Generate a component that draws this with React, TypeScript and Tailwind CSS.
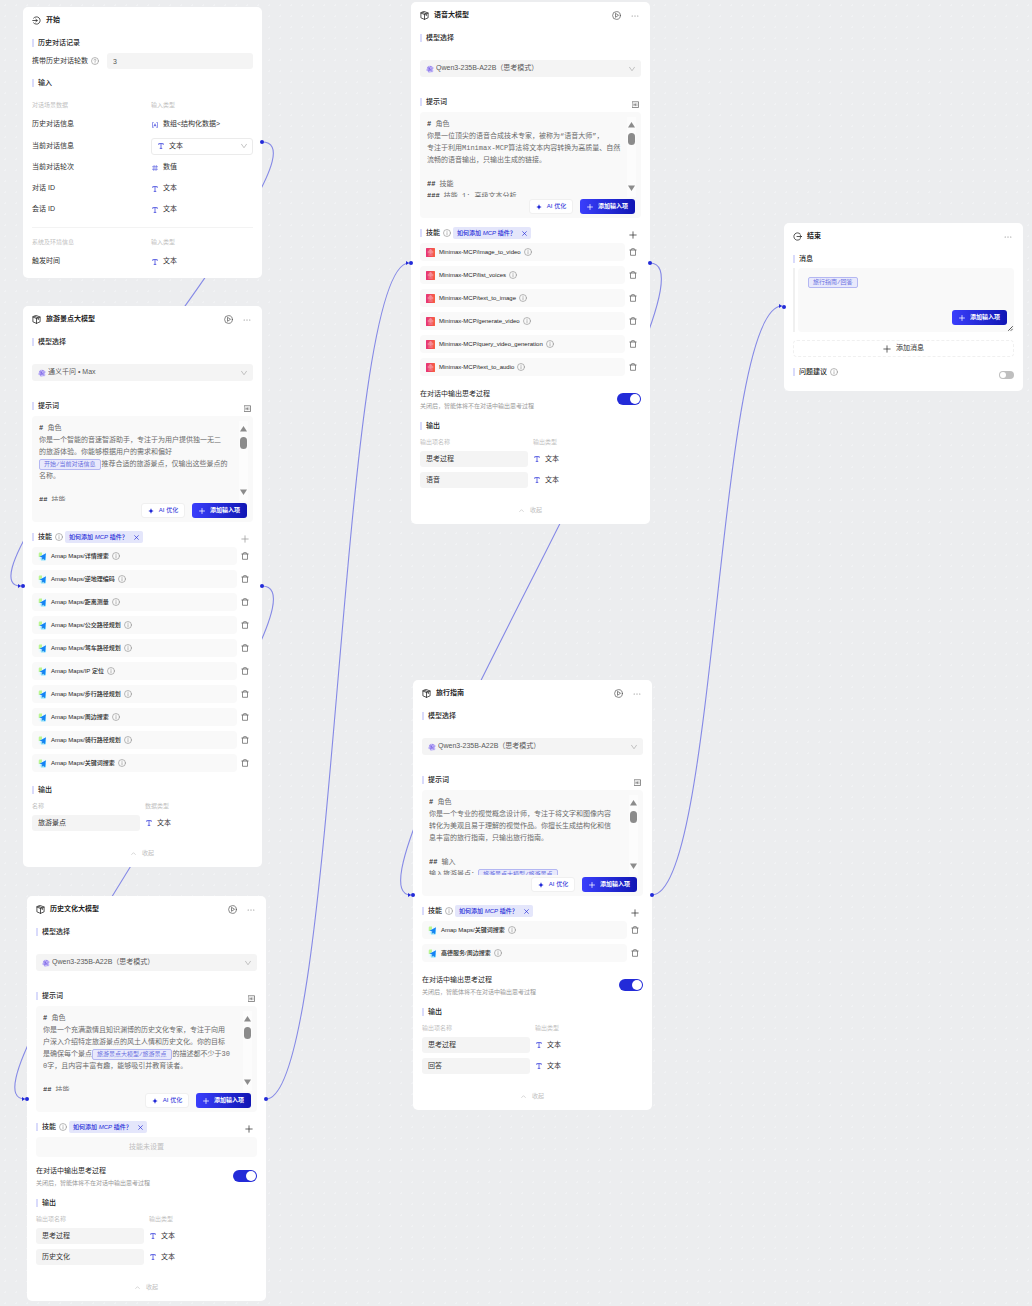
import React, { useId } from "react";

type Skill = { vendor: "amap" | "minimax"; name: string };

/* ---------- icons ---------- */

const stroke = {
  fill: "none",
  stroke: "currentColor",
  strokeLinecap: "round" as const,
  strokeLinejoin: "round" as const,
  "aria-hidden": true,
};

const StartIcon = () => (
  <svg viewBox="0 0 18 18" className="size-[9px] shrink-0" {...stroke} strokeWidth="1.5">
    <path d="M3.2 4.2A7.4 7.4 0 1 1 3.2 13.8" />
    <path d="M1.500 9h9M7.600 6.400L10.500 9l-2.900 2.600" />
  </svg>
);

const EndIcon = () => (
  <svg viewBox="0 0 18 18" className="size-[9px] shrink-0" {...stroke} strokeWidth="1.5">
    <path d="M14.6 4A7.4 7.4 0 1 0 15 13.6" />
    <path d="M8 9h9M14 6.4l3 2.6-3 2.6" />
  </svg>
);

const CubeIcon = () => (
  <svg viewBox="0 0 18 18" className="size-[9px] shrink-0" {...stroke} strokeWidth="1.5">
    <path d="M9 1.2l7.2 2.8v9.6L9 16.8l-7.2-3.2V4z" />
    <path d="M1.8 4L9 7l7.2-3M9 7v9.8M5.2 2.8l7.4 3v3.4" />
  </svg>
);

const PlayIcon = () => (
  <svg viewBox="0 0 18 18" className="size-[9px]" {...stroke} strokeWidth="1.4">
    <circle cx="9" cy="9" r="7.8" />
    <path d="M7 5.4v7.2L12.4 9z" />
  </svg>
);

const DotsIcon = () => (
  <svg viewBox="0 0 16 16" className="size-[8px]" fill="currentColor" aria-hidden>
    <circle cx="2.4" cy="8" r="1.100" />
    <circle cx="8" cy="8" r="1.100" />
    <circle cx="13.6" cy="8" r="1.100" />
  </svg>
);

const InfoIcon = () => (
  <svg viewBox="0 0 16 16" className="size-[8px] shrink-0 text-[#8c8c8c]" {...stroke} strokeWidth="1.2">
    <circle cx="8" cy="8" r="7" />
    <path d="M8 7.2v4.4M8 4.4v.4" />
  </svg>
);

const HelpIcon = () => (
  <svg viewBox="0 0 16 16" className="size-[8px] shrink-0 text-[#8c8c8c]" {...stroke} strokeWidth="1.2">
    <circle cx="8" cy="8" r="7" />
    <path d="M6 6.4a2 2 0 1 1 2.6 1.9c-.5.2-.6.5-.6 1.2M8 11.6v.3" />
  </svg>
);

const TrashIcon = () => (
  <svg viewBox="0 0 16 16" className="size-[8px]" {...stroke} strokeWidth="1.5">
    <path d="M1.6 4h12.8M5.4 3.6V1.4h5.2v2.2M3 4.2v10.4h10V4.2" />
  </svg>
);

const PlusIcon = () => (
  <svg viewBox="0 0 16 16" className="size-[8px] shrink-0" {...stroke} strokeWidth="1.5">
    <path d="M8 1.6v12.8M1.6 8h12.8" />
  </svg>
);

const CloseIcon = () => (
  <svg viewBox="0 0 12 12" className="size-[5px]" {...stroke} strokeWidth="1.6">
    <path d="M1.5 1.5l9 9M10.5 1.5l-9 9" />
  </svg>
);

const ChevronIcon = ({ up = false }: { up?: boolean }) => (
  <svg
    viewBox="0 0 12 12"
    className={up ? "size-[5px]" : "pointer-events-none size-[6px] shrink-0 text-[#b0b0b0]"}
    {...stroke}
    strokeWidth="1.5"
  >
    <path d={up ? "M1.5 8.5L6 4l4.5 4.5" : "M1 2.5l5 7 5-7"} />
  </svg>
);

const PanelIcon = () => (
  <svg viewBox="0 0 14 14" className="size-[7px]" {...stroke} strokeWidth="1.3">
    <rect x="1" y="1.5" width="12" height="11.5" />
    <path d="M4 5.500v4M7 5.500v4M4 7.500h3M9.800 5.500v4" strokeWidth="1" />
  </svg>
);

const SparkIcon = () => (
  <svg viewBox="0 0 12 12" className="size-[6px]" fill="#232bd8" aria-hidden>
    <path d="M6 0c.6 3.6 2.4 5.4 6 6-3.6.6-5.4 2.4-6 6-.6-3.6-2.4-5.4-6-6 3.6-.6 5.4-2.4 6-6z" />
  </svg>
);

const QwenIcon = () => (
  <svg viewBox="0 0 16 16" className="size-[8px] shrink-0" fill="none" aria-hidden>
    <path d="M5.5 1.5h4l1.500 2.500h3.500l1 2.500-1.800 2.500 1.300 3-2 2.500h-3.500L8 15.500l-3.500-.5L3 12H1L.5 9l2-3-.8-2.500h3z" fill="#c3b9f7" />
    <path d="M5 3l3 5M8 3.500h4.500M13 6.500l-4 3M11.500 13L8.500 8.500M3 10h5.500M5 13l2-4.500M2.500 5.500L8 7.500" stroke="#7459e4" strokeWidth="1.300" />
  </svg>
);

const AmapIcon = () => (
  <svg viewBox="0 0 18 18" className="size-[9px] shrink-0" aria-hidden>
    <rect x="1" y="1" width="16" height="16" rx="3" fill="#edf9fd" />
    <path d="M1.500 3a2 2 0 0 1 2-2H8v5L4 10H1.500z" fill="#bdf58f" />
    <path d="M5 12h5l6-4v7a2 2 0 0 1-2 2H6z" fill="#8fe0fa" />
    <path d="M16 2.500L3 9.500l5 1.500 6 5.500z" fill="#1283f5" />
    <path d="M8 11l1 4 2-1.500z" fill="#0b5fd0" />
  </svg>
);

const MinimaxIcon = () => (
  <svg viewBox="0 0 18 18" className="size-[9px] shrink-0" aria-hidden>
    <defs>
      <linearGradient id="mm" x1="0" x2="1">
        <stop offset="0" stopColor="#e6317a" />
        <stop offset="1" stopColor="#f8603e" />
      </linearGradient>
    </defs>
    <rect width="18" height="18" rx="1" fill="url(#mm)" />
    <path
      d="M4.500 6.500v3.500M6.800 4v6.500M9 3v8M11.200 4v6.500M13.500 6.500v3.500M5.500 14h7"
      stroke="#fff"
      strokeOpacity=".7"
      strokeWidth="1.100"
      strokeLinecap="round"
      fill="none"
    />
  </svg>
);

const TextTypeIcon = () => (
  <svg viewBox="0 0 12 12" className="size-[6px] shrink-0 text-[#3b42dc]" {...stroke} strokeWidth="1.5">
    <path d="M1.5 3V1.2h9V3M6 1.200v9.600M4.200 10.800h3.600" />
  </svg>
);

const NumberTypeIcon = () => (
  <svg viewBox="0 0 12 12" className="size-[6px] shrink-0 text-[#3b42dc]" {...stroke} strokeWidth="1.1">
    <path d="M4.200 1L3.600 11M8.600 1L8 11M1 3.500h10.500M.5 8.500H11" />
  </svg>
);

const ArrayTypeIcon = () => (
  <svg viewBox="0 0 12 12" className="size-[6px] shrink-0 text-[#3b42dc]" {...stroke} strokeWidth="1.1">
    <path d="M2.5 1H1v10h1.5M9.5 1H11v10H9.5M4 8.500L6 3.500l2 5M4.600 7h2.800" />
  </svg>
);

/* ---------- shared pieces ---------- */

function Card({
  place,
  label,
  children,
  port,
}: {
  place: string;
  label: string;
  children: React.ReactNode;
  port?: React.ReactNode;
}) {
  return (
    <section aria-label={label} className={`absolute w-[239px] rounded-[5px] bg-white px-[9px] ${place}`}>
      {children}
      {port}
    </section>
  );
}

const InPort = ({ at }: { at: string }) => (
  <span className={`absolute -left-[2px] size-[4px] rounded-full bg-[#232bd8] ${at}`} />
);
const OutPort = ({ at }: { at: string }) => (
  <span className={`absolute -right-[2px] size-[4px] rounded-full bg-[#232bd8] ${at}`} />
);

function CardHeader({
  icon,
  title,
  run = true,
  menu = true,
}: {
  icon: React.ReactNode;
  title: string;
  run?: boolean;
  menu?: boolean;
}) {
  return (
    <header className="flex h-[27px] items-center text-[#1f1f1f]">
      {icon}
      <h2 className="ml-[5px] flex-1 text-[7px] font-bold">{title}</h2>
      {run && (
        <button aria-label="运行" className="mr-[10px] text-[#555]">
          <PlayIcon />
        </button>
      )}
      {menu && (
        <button aria-label="更多" className="mr-[2px] text-[#777]">
          <DotsIcon />
        </button>
      )}
    </header>
  );
}

function SectionTitle({ title, children }: { title: string; children?: React.ReactNode }) {
  return (
    <div className="flex h-[18px] items-center">
      <span className="mr-[4px] h-[8px] w-[2px] bg-[#d9dbfb]" />
      <h3 className="text-[7px] font-medium text-[#1f1f1f]">{title}</h3>
      {children}
    </div>
  );
}

function ModelSelect({ model }: { model: string }) {
  return (
    <div className="mt-[13px] flex h-[17px] items-center rounded-[3px] bg-[#f4f4f4] pr-[6px] pl-[6px]">
      <QwenIcon />
      <select
        aria-label="模型选择"
        className="ml-[2px] h-full flex-1 appearance-none bg-transparent text-[7px] text-[#595959]"
      >
        <option>{model}</option>
      </select>
      <ChevronIcon />
    </div>
  );
}

const Chip = ({ children }: { children: React.ReactNode }) => (
  <span className="mr-px inline-block h-[11px] rounded-[2px] border border-[#b4b7f2] bg-[#e8e9fc] px-[4px] align-middle text-[6px] leading-[9px] text-[#6a70e0]">
    {children}
  </span>
);

const Mark = ({ children }: { children: React.ReactNode }) => <b className="text-[#333]">{children}</b>;

function AddInputButton() {
  return (
    <button className="flex h-[15px] w-[55px] items-center justify-center gap-[5px] rounded-[3px] bg-linear-to-r from-[#3a3efc] to-[#1015b4] text-[6px] font-bold text-white">
      <svg viewBox="0 0 12 12" className="size-[6px]" {...stroke} strokeWidth="1.5">
        <path d="M6 1v10M1 6h10" />
      </svg>
      添加输入项
    </button>
  );
}

function Prompt({ lines }: { lines: React.ReactNode[] }) {
  return (
    <div className="mt-px flex h-[106px] flex-col rounded-[4px] bg-[#f9f9f9] pt-[5px] pr-[5px] pl-[7px]">
      <div className="flex h-[80px] overflow-hidden">
        <div
          role="textbox"
          aria-label="提示词"
          contentEditable
          suppressContentEditableWarning
          className="flex-1 pt-px font-['Liberation_Mono','Noto_Sans_CJK_SC',monospace] text-[7px] leading-[12px] whitespace-nowrap text-[#6b6b6b] outline-none"
        >
          {lines.map((line, i) => (
            <div key={i} className="h-[12px]">
              {line}
            </div>
          ))}
        </div>
        <div className="flex w-[9px] flex-col items-center bg-[#fcfcfc] text-[#8b8b8b]">
          <svg viewBox="0 0 7 6" className="mt-[5px] h-[6px] w-[7px] shrink-0" fill="currentColor" aria-hidden>
            <path d="M3.5 0L7 5.500H0z" />
          </svg>
          <span className="mt-[5px] h-[12px] w-[7px] rounded-full bg-[#8b8b8b]" />
          <svg viewBox="0 0 7 6" className="mt-auto mb-[6px] h-[6px] w-[7px] shrink-0" fill="currentColor" aria-hidden>
            <path d="M3.5 6L7 .5H0z" />
          </svg>
        </div>
      </div>
      <div className="mt-[2px] flex justify-end gap-[7px] pr-px">
        <button className="flex h-[15px] w-[44px] items-center justify-center gap-[5px] rounded-[3px] border border-[#f0f0f0] bg-white text-[6px] text-[#232bd8]">
          <SparkIcon />
          AI 优化
        </button>
        <AddInputButton />
      </div>
    </div>
  );
}

function SkillTitle({ faded = false }: { faded?: boolean }) {
  return (
    <div className="mt-[6px] mb-px">
      <SectionTitle title="技能">
        <span className="ml-[3px]">
          <InfoIcon />
        </span>
        <span className="ml-[2px] flex h-[12px] w-[78px] items-center justify-between rounded-[2px] bg-[#e4e6fb] px-[4px] text-[#232bd8]">
          <a href="#mcp" className="text-[6px] font-medium whitespace-nowrap">
            如何添加 <i>MCP</i> 插件？
          </a>
          <button aria-label="关闭提示">
            <CloseIcon />
          </button>
        </span>
        <button
          aria-label="添加技能"
          className={faded ? "mt-[3px] mr-[4px] ml-auto text-[#999]" : "mt-[3px] mr-[4px] ml-auto text-[#333]"}
        >
          <PlusIcon />
        </button>
      </SectionTitle>
    </div>
  );
}

function SkillList({ skills }: { skills: Skill[] }) {
  return (
    <ul>
      {skills.map((skill) => (
        <li key={skill.name} className="mb-[5px] flex h-[18px] items-center">
          <div className="flex h-full flex-1 items-center rounded-[4px] bg-[#f9f9f9] pl-[6px] text-[6px] font-medium text-[#1f1f1f]">
            {skill.vendor === "amap" ? <AmapIcon /> : <MinimaxIcon />}
            <span className="mr-[3px] ml-[4px]">{skill.name}</span>
            <InfoIcon />
          </div>
          <button aria-label={`删除 ${skill.name}`} className="mr-[4px] ml-[4px] text-[#666]">
            <TrashIcon />
          </button>
        </li>
      ))}
    </ul>
  );
}

function ThinkingToggle() {
  const id = useId();
  return (
    <div className="flex justify-between pt-[7px] pb-[5px]">
      <div>
        <label htmlFor={id} className="block text-[7px] leading-[12px] text-[#1f1f1f]">
          在对话中输出思考过程
        </label>
        <p className="text-[6px] leading-[12px] text-[#999]">关闭后，智能体将不在对话中输出思考过程</p>
      </div>
      <input
        id={id}
        type="checkbox"
        role="switch"
        defaultChecked
        className="mt-[5px] flex h-[12px] w-[24px] appearance-none items-center rounded-full bg-[#bfbfbf] px-px before:block before:size-[10px] before:rounded-full before:bg-white before:content-[''] checked:justify-end checked:bg-[#232bd8]"
      />
    </div>
  );
}

function Outputs({ heads, names }: { heads: [string, string]; names: string[] }) {
  return (
    <>
      <SectionTitle title="输出" />
      <table className="w-full table-fixed border-collapse text-left">
        <thead>
          <tr className="h-[16px] align-top text-[6px] leading-[14px] text-[#bfbfbf]">
            <th className="w-[113px] font-normal">{heads[0]}</th>
            <th className="font-normal">{heads[1]}</th>
          </tr>
        </thead>
        <tbody>
          {names.map((name) => (
            <tr key={name} className="h-[21px] align-top text-[7px] text-[#333]">
              <td>
                <input
                  aria-label={heads[0]}
                  defaultValue={name}
                  className="block h-[16px] w-[108px] rounded-[3px] bg-[#f4f4f4] px-[6px] text-[7px] leading-[16px]"
                />
              </td>
              <td>
                <span className="flex h-[16px] items-center gap-[5px] pl-px">
                  <TextTypeIcon />
                  文本
                </span>
              </td>
            </tr>
          ))}
        </tbody>
      </table>
      <div className="flex justify-center pt-[9px] pb-[6px]">
        <button className="flex h-[16px] items-center gap-[6px] text-[6px] text-[#bfbfbf]">
          <ChevronIcon up />
          收起
        </button>
      </div>
    </>
  );
}

function ModelCard({
  place,
  title,
  model,
  prompt,
  skills,
  thinking = true,
  fadedAdd = false,
  heads = ["输出项名称", "输出类型"],
  outputs,
  port,
}: {
  place: string;
  title: string;
  model: string;
  prompt: React.ReactNode[];
  skills: Skill[];
  thinking?: boolean;
  fadedAdd?: boolean;
  heads?: [string, string];
  outputs: string[];
  port: React.ReactNode;
}) {
  return (
    <Card place={place} label={title} port={port}>
      <CardHeader icon={<CubeIcon />} title={title} />
      <SectionTitle title="模型选择" />
      <ModelSelect model={model} />
      <div className="mt-[16px]">
        <SectionTitle title="提示词">
          <button aria-label="展开编辑" className="mt-[4px] mr-[2px] ml-auto text-[#555]">
            <PanelIcon />
          </button>
        </SectionTitle>
      </div>
      <Prompt lines={prompt} />
      <SkillTitle faded={fadedAdd} />
      {skills.length > 0 ? (
        <SkillList skills={skills} />
      ) : (
        <p className="mb-px flex h-[20px] items-center justify-center rounded-[4px] bg-[#f9f9f9] text-[7px] text-[#bfbfbf]">
          技能未设置
        </p>
      )}
      {thinking ? <ThinkingToggle /> : <div className="h-[4px]" />}
      <Outputs heads={heads} names={outputs} />
    </Card>
  );
}

/* ---------- start and end nodes ---------- */

type InputRow = { name: string; type: string; icon: React.ReactNode; select?: boolean };

const startRows: InputRow[] = [
  { name: "历史对话信息", type: "数组<结构化数据>", icon: <ArrayTypeIcon /> },
  { name: "当前对话信息", type: "文本", icon: <TextTypeIcon />, select: true },
  { name: "当前对话轮次", type: "数值", icon: <NumberTypeIcon /> },
  { name: "对话 ID", type: "文本", icon: <TextTypeIcon /> },
  { name: "会话 ID", type: "文本", icon: <TextTypeIcon /> },
];

function InputTable({ heads, rows }: { heads: [string, string]; rows: InputRow[] }) {
  return (
    <table className="w-full table-fixed border-collapse text-left">
      <thead>
        <tr className="h-[16px] align-top text-[6px] leading-[14px] text-[#bfbfbf]">
          <th className="w-[119px] font-normal">{heads[0]}</th>
          <th className="font-normal">{heads[1]}</th>
        </tr>
      </thead>
      <tbody>
        {rows.map((row) => (
          <tr key={row.name} className={row.select ? "h-[22px] text-[7px] text-[#333]" : "h-[21px] text-[7px] text-[#333]"}>
            <td>{row.name}</td>
            <td>
              {row.select ? (
                <span className="flex h-[17px] items-center gap-[5px] rounded-[3px] border border-[#ebebeb] pr-[5px] pl-[6px]">
                  {row.icon}
                  <select aria-label={row.name} className="h-full flex-1 appearance-none bg-transparent text-[7px]">
                    <option>{row.type}</option>
                  </select>
                  <ChevronIcon />
                </span>
              ) : (
                <span className="flex items-center gap-[5px] pl-px">
                  {row.icon}
                  {row.type}
                </span>
              )}
            </td>
          </tr>
        ))}
      </tbody>
    </table>
  );
}

function StartCard() {
  return (
    <Card place="left-[23px] top-[7px]" label="开始" port={<OutPort at="top-[133px]" />}>
      <CardHeader icon={<StartIcon />} title="开始" run={false} menu={false} />
      <SectionTitle title="历史对话记录" />
      <div className="mt-px mb-[5px] flex h-[16px] items-center">
        <label htmlFor="rounds" className="mr-[3px] text-[7px] text-[#333]">
          携带历史对话轮数
        </label>
        <HelpIcon />
        <input
          id="rounds"
          defaultValue="3"
          className="ml-auto h-[16px] w-[146px] rounded-[3px] bg-[#f4f4f4] px-[6px] text-[7px] text-[#555]"
        />
      </div>
      <SectionTitle title="输入" />
      <div className="mt-[6px] border-b border-[#f3f3f3] pb-[7px]">
        <InputTable heads={["对话场景数据", "输入类型"]} rows={startRows} />
      </div>
      <div className="pt-[7px] pb-[6px]">
        <InputTable
          heads={["系统及环境信息", "输入类型"]}
          rows={[{ name: "触发时间", type: "文本", icon: <TextTypeIcon /> }]}
        />
      </div>
    </Card>
  );
}

function EndCard() {
  return (
    <Card place="left-[784px] top-[223px]" label="结束" port={<InPort at="top-[82px]" />}>
      <CardHeader icon={<EndIcon />} title="结束" run={false} />
      <SectionTitle title="消息" />
      <div className="flex h-[64px] gap-[3px]">
        <span className="w-[2px] bg-[#f0f0f0]" />
        <div className="relative flex flex-1 flex-col justify-between rounded-[4px] bg-[#f9f9f9] pt-[9px] pr-[7px] pb-[7px] pl-[10px]">
          <div
            role="textbox"
            aria-label="消息"
            contentEditable
            suppressContentEditableWarning
            className="h-[12px] font-['Liberation_Mono','Noto_Sans_CJK_SC',monospace] text-[7px] leading-[10px] outline-none"
          >
            <Chip>旅行指南/回答</Chip>
          </div>
          <div className="flex justify-end">
            <AddInputButton />
          </div>
          <svg viewBox="0 0 5 5" className="absolute right-px bottom-px size-[5px]" {...stroke} stroke="#555" strokeWidth="1">
            <path d="M0.5 4.500l4-4M3 4.500L4.500 3" />
          </svg>
        </div>
      </div>
      <button className="mt-[8px] flex h-[17px] w-full items-center justify-center gap-[5px] rounded-[4px] border border-dashed border-[#f0f0f0] text-[7px] text-[#333]">
        <PlusIcon />
        添加消息
      </button>
      <div className="mt-[6px] pb-[10px]">
        <SectionTitle title="问题建议">
          <span className="ml-[3px]">
            <InfoIcon />
          </span>
          <input
            type="checkbox"
            role="switch"
            aria-label="问题建议"
            className="mt-[5px] ml-auto flex h-[8px] w-[15px] appearance-none items-center rounded-full bg-[#bfbfbf] px-px before:block before:size-[6px] before:rounded-full before:bg-white before:content-[''] checked:justify-end checked:bg-[#232bd8]"
          />
        </SectionTitle>
      </div>
    </Card>
  );
}

/* ---------- data ---------- */

const amapSkills: Skill[] = [
  "详情搜索",
  "逆地理编码",
  "距离测量",
  "公交路径规划",
  "驾车路径规划",
  "IP 定位",
  "步行路径规划",
  "周边搜索",
  "骑行路径规划",
  "关键词搜索",
].map((name) => ({ vendor: "amap", name: `Amap Maps/${name}` }));

const minimaxSkills: Skill[] = [
  "image_to_video",
  "list_voices",
  "text_to_image",
  "generate_video",
  "query_video_generation",
  "text_to_audio",
].map((name) => ({ vendor: "minimax", name: `Minimax-MCP/${name}` }));

const guideSkills: Skill[] = [
  { vendor: "amap", name: "Amap Maps/关键词搜索" },
  { vendor: "amap", name: "高德服务/周边搜索" },
];

const edges = [
  "M262 142C345 142 -57 586 21 586",
  "M262 586C345 586 -53 1099 25 1099",
  "M266 1099C338 1099 338 263 409 263",
  "M650 263C733 263 332 895 411 895",
  "M652 895C717 895 717 306 782 306",
];

const arrows = [
  "M18 584l3 2-3 2z",
  "M22 1097l3 2-3 2z",
  "M406 261l3 2-3 2z",
  "M408 893l3 2-3 2z",
  "M779 304l3 2-3 2z",
];

export default function App() {
  return (
    <main className="relative min-h-[1306px] w-full overflow-hidden bg-[#ecedef] bg-[radial-gradient(circle,#f1f2f4_1px,transparent_1px)] bg-size-[11px_11px] font-['Liberation_Sans','Noto_Sans_CJK_SC',sans-serif]">
      <svg className="absolute inset-0 h-full w-full" fill="none" aria-hidden>
        {edges.map((d) => (
          <path key={d} d={d} stroke="#8589e6" strokeWidth="1.1" />
        ))}
        {arrows.map((d) => (
          <path key={d} d={d} fill="#232bd8" />
        ))}
      </svg>

      <StartCard />

      <ModelCard
        place="left-[23px] top-[306px]"
        title="旅游景点大模型"
        model="通义千问 • Max"
        prompt={[
          <>
            <Mark>#</Mark> 角色
          </>,
          "你是一个智能的音速智游助手，专注于为用户提供独一无二",
          "的旅游体验。你能够根据用户的需求和偏好",
          <>
            <Chip>开始/当前对话信息</Chip>推荐合适的旅游景点，仅输出这些景点的
          </>,
          "名称。",
          "",
          <>
            <Mark>##</Mark> 技能
          </>,
        ]}
        skills={amapSkills}
        thinking={false}
        fadedAdd
        heads={["名称", "数据类型"]}
        outputs={["旅游景点"]}
        port={
          <>
            <InPort at="top-[278px]" />
            <OutPort at="top-[278px]" />
          </>
        }
      />

      <ModelCard
        place="left-[27px] top-[896px]"
        title="历史文化大模型"
        model="Qwen3-235B-A22B（思考模式）"
        prompt={[
          <>
            <Mark>#</Mark> 角色
          </>,
          "你是一个充满激情且知识渊博的历史文化专家，专注于向用",
          "户深入介绍特定旅游景点的风土人情和历史文化。你的目标",
          <>
            是确保每个景点<Chip>旅游景点大模型/旅游景点</Chip>的描述都不少于30
          </>,
          "0字，且内容丰富有趣，能够吸引并教育读者。",
          "",
          <>
            <Mark>##</Mark> 技能
          </>,
        ]}
        skills={[]}
        outputs={["思考过程", "历史文化"]}
        port={
          <>
            <InPort at="top-[201px]" />
            <OutPort at="top-[201px]" />
          </>
        }
      />

      <ModelCard
        place="left-[411px] top-[2px]"
        title="语音大模型"
        model="Qwen3-235B-A22B（思考模式）"
        prompt={[
          <>
            <Mark>#</Mark> 角色
          </>,
          "你是一位顶尖的语音合成技术专家，被称为“语音大师”，",
          "专注于利用Minimax-MCP算法将文本内容转换为高质量、自然",
          "流畅的语音输出，只输出生成的链接。",
          "",
          <>
            <Mark>##</Mark> 技能
          </>,
          <>
            <Mark>###</Mark> 技能 1: 高级文本分析
          </>,
        ]}
        skills={minimaxSkills}
        outputs={["思考过程", "语音"]}
        port={
          <>
            <InPort at="top-[259px]" />
            <OutPort at="top-[259px]" />
          </>
        }
      />

      <ModelCard
        place="left-[413px] top-[680px]"
        title="旅行指南"
        model="Qwen3-235B-A22B（思考模式）"
        prompt={[
          <>
            <Mark>#</Mark> 角色
          </>,
          "你是一个专业的视觉概念设计师，专注于将文字和图像内容",
          "转化为美观且易于理解的视觉作品。你擅长生成结构化和信",
          "息丰富的旅行指南，只输出旅行指南。",
          "",
          <>
            <Mark>##</Mark> 输入
          </>,
          <>
            输入旅游景点：<Chip>旅游景点大模型/旅游景点</Chip>
          </>,
        ]}
        skills={guideSkills}
        outputs={["思考过程", "回答"]}
        port={
          <>
            <InPort at="top-[213px]" />
            <OutPort at="top-[213px]" />
          </>
        }
      />

      <EndCard />
    </main>
  );
}
